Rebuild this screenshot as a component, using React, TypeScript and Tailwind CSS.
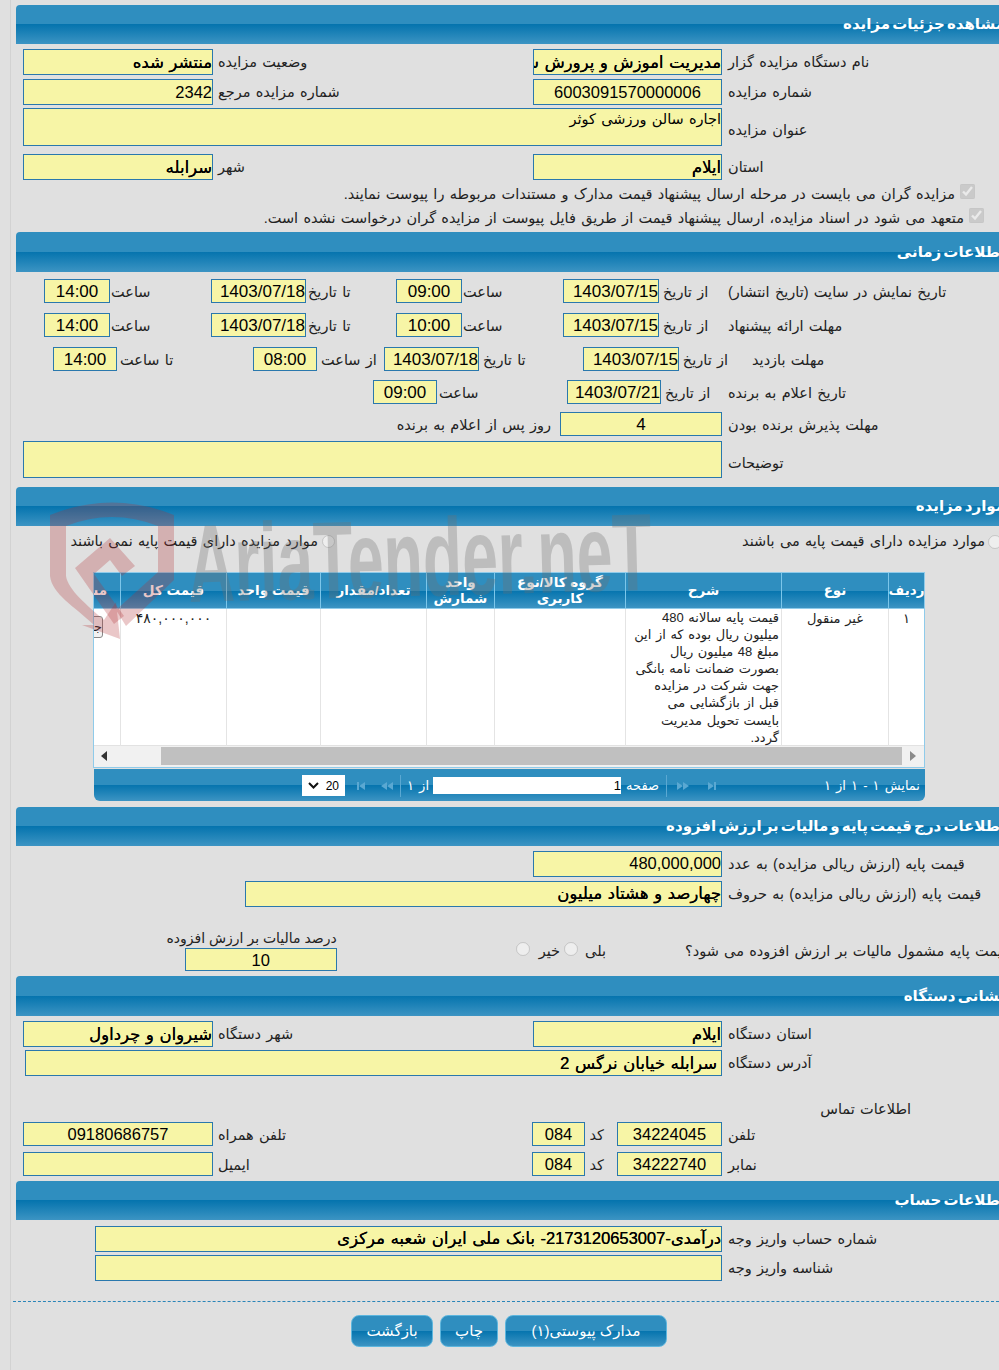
import React from 'react';

const barBg = 'bg-[linear-gradient(to_bottom,#2f8ebf_0%,#2f8ebf_50%,#0574ae_50%,#3c94c3_100%)]';
const val = 'text-[16.5px] [word-spacing:1px] [text-shadow:0.2px_0_0_#000]';
const num = 'text-[16.5px]';

const SectionBar = ({ title, className = '' }: { title: string; className?: string }) => (
  <div className={`${barBg} ml-[16px] h-[39px] rounded-tl-[4px] flex items-center overflow-visible ${className}`}>
    <span className="text-white font-bold text-[15px] -mr-[6px] whitespace-nowrap [word-spacing:-2px]">{title}</span>
  </div>
);

const Box = ({ children, className = '' }: { children?: React.ReactNode; className?: string }) => (
  <div className={`bg-[#f7f5a6] border border-[#2a78ad] text-black overflow-hidden whitespace-nowrap ${className}`}>
    {children}
  </div>
);

const Label = ({ children, className = '' }: { children: React.ReactNode; className?: string }) => (
  <div className={`text-left text-[14.5px] text-[#222] whitespace-nowrap leading-[26px] ${className}`}>{children}</div>
);

const pairGrid = 'grid grid-cols-[277px_189px_320px_190px] h-[25px]';

const TimeBox = ({ value }: { value: string }) => (
  <Box className="text-[17px] text-center h-[24px] leading-[23px]">{value}</Box>
);

const DateBox = ({ value }: { value: string }) => (
  <Box className="text-[17px] text-right h-[24px] leading-[23px]">{value}</Box>
);

const NumBox = ({ value }: { value: string }) => (
  <Box className="text-[16.5px] text-center h-[24px] leading-[23px]">{value}</Box>
);

const PagerIcon = ({ flip, bar, double }: { flip?: boolean; bar?: boolean; double?: boolean }) => (
  <svg width="16" height="10" viewBox="0 0 16 10" className={flip ? '-scale-x-100' : ''} fill="#5aa8d2">
    {bar && <rect x="1" y="1" width="2" height="8" />}
    <path d="M3 5l6-4v8z" />
    {double && <path d="M9 5l6-4v8z" />}
  </svg>
);

const Btn = ({ children, className = '' }: { children: React.ReactNode; className?: string }) => (
  <button className={`${barBg} h-[32px] rounded-[8px] border border-[#5db6de] text-white text-[15px] ${className}`}>{children}</button>
);

const cols = 'grid grid-cols-[36px_107px_156px_131px_68px_106px_94px_106px_60px]';

const headers = ['ردیف', 'نوع', 'شرح', 'گروه کالا/نوع کاربری', 'واحد شمارش', 'تعداد/مقدار', 'قیمت واحد', 'قیمت کل'];

const Watermark = () => (
  <div className="absolute left-0 top-0 w-[999px] h-[660px] pointer-events-none overflow-hidden">
    <svg className="absolute left-[48px] top-[498px]" width="130" height="148" viewBox="0 0 130 148">
      <path
        d="M2 17 Q64 -8 126 17 L126 82 L78 128 L68 112 L110 74 L110 28 Q64 10 18 28 L18 78 C20 92 40 108 56 122 L68 104 L72 141 L34 127 L46 127 C26 108 4 96 2 78 Z"
        fill="#b03035"
        fillOpacity="0.27"
      />
      <path d="M27 70 L62 40 L87 68 L74 78 L62 62 L46 76 L76 118 L66 126 Z" fill="#b03035" fillOpacity="0.27" />
    </svg>
    <div className="absolute left-[188px] top-[509px] origin-left -rotate-[1.5deg] scale-x-[0.585] text-[#707070] opacity-30 font-bold text-[110px] leading-[110px] whitespace-nowrap [word-spacing:0] [font-family:'Liberation_Sans',sans-serif]">
      AriaTender.neT
    </div>
  </div>
);

export default function App() {
  return (
    <div className="relative w-[999px] h-[1370px] overflow-hidden bg-[#e0e0e0] [word-spacing:1.25px] [font-family:'Liberation_Sans','DejaVu_Sans',sans-serif]" dir="rtl">
      <div className="absolute left-[10px] top-0 w-px h-full bg-[#d2d2d2]" />

      <div className="pt-[5px]">
        {/* details */}
        <SectionBar title="مشاهده جزئیات مزایده" />
        <div className={`${pairGrid} mt-[5px]`}>
          <Label className="pl-[6px]">نام دستگاه مزایده گزار</Label>
          <Box className={`${val} leading-[24px]`}>مدیریت اموزش و پرورش شهرستان سیروان</Box>
          <Label className="pl-[5px]">وضعیت مزایده</Label>
          <Box className={`${val} leading-[24px]`}>منتشر شده</Box>
        </div>
        <div className={`${pairGrid} mt-[5px]`}>
          <Label className="pl-[6px]">شماره مزایده</Label>
          <Box className={`${num} leading-[24px] text-center`}>6003091570000006</Box>
          <Label className="pl-[5px]">شماره مزایده مرجع</Label>
          <Box className={`${num} leading-[24px]`}>2342</Box>
        </div>
        <div className="grid grid-cols-[277px_699px] mt-[4px] h-[38px]">
          <Label className="pl-[6px] pt-[9px]">عنوان مزایده</Label>
          <Box className="text-[14.5px] leading-[20px]">اجاره سالن ورزشی کوثر</Box>
        </div>
        <div className={`${pairGrid} mt-[8px]`}>
          <Label className="pl-[6px]">استان</Label>
          <Box className={`${val} leading-[24px]`}>ایلام</Box>
          <Label className="pl-[5px]">شهر</Label>
          <Box className={`${val} leading-[24px]`}>سرابله</Box>
        </div>
        <div className="flex items-center h-[20px] mt-[5px] pr-[24px] text-[14.5px] text-[#222] gap-[5px] whitespace-nowrap">
          <input type="checkbox" disabled checked readOnly className="w-[15px] h-[15px] -mt-[6px] m-0" />
          <span className="pt-[2px]">مزایده گران می بایست در مرحله ارسال پیشنهاد قیمت مدارک و مستندات مربوطه را پیوست نمایند.</span>
        </div>
        <div className="flex items-center h-[20px] mt-[4px] pr-[15px] text-[14.5px] text-[#222] gap-[5px] whitespace-nowrap">
          <input type="checkbox" disabled checked readOnly className="w-[15px] h-[15px] -mt-[6px] m-0" />
          <span className="pt-[2px]">متعهد می شود در اسناد مزایده، ارسال پیشنهاد قیمت از طریق فایل پیوست از مزایده گران درخواست نشده است.</span>
        </div>

        {/* timing */}
        <SectionBar title="اطلاعات زمانی" className="mt-[4px] h-[40px]" />
        <div className="grid grid-cols-[277px_63px_96px_101px_66px_90px_95px_101px_66px] h-[24px] mt-[7px]">
          <Label className="pl-[6px]">تاریخ نمایش در سایت (تاریخ انتشار)</Label>
          <Label className="pl-[4px]">از تاریخ</Label>
          <DateBox value="1403/07/15" />
          <Label className="pl-[1px]">ساعت</Label>
          <TimeBox value="09:00" />
          <Label className="pl-[2px]">تا تاریخ</Label>
          <DateBox value="1403/07/18" />
          <Label className="pl-[1px]">ساعت</Label>
          <TimeBox value="14:00" />
        </div>
        <div className="grid grid-cols-[277px_63px_96px_101px_66px_90px_95px_101px_66px] h-[24px] mt-[10px]">
          <Label className="pl-[6px]">مهلت ارائه پیشنهاد</Label>
          <Label className="pl-[4px]">از تاریخ</Label>
          <DateBox value="1403/07/15" />
          <Label className="pl-[1px]">ساعت</Label>
          <TimeBox value="10:00" />
          <Label className="pl-[2px]">تا تاریخ</Label>
          <DateBox value="1403/07/18" />
          <Label className="pl-[1px]">ساعت</Label>
          <TimeBox value="14:00" />
        </div>
        <div className="grid grid-cols-[277px_43px_96px_104px_95px_67px_64px_136px_64px] h-[24px] mt-[10px]">
          <Label className="pl-[30px]">مهلت بازدید</Label>
          <Label className="pl-[4px] -mr-[6px]">از تاریخ</Label>
          <DateBox value="1403/07/15" />
          <Label className="pl-[4px]">تا تاریخ</Label>
          <DateBox value="1403/07/18" />
          <Label className="pl-[4px]">از ساعت</Label>
          <TimeBox value="08:00" />
          <Label className="pl-[3px]">تا ساعت</Label>
          <TimeBox value="14:00" />
        </div>
        <div className="grid grid-cols-[277px_61px_94px_130px_64px] h-[24px] mt-[9px]">
          <Label className="pl-[6px]">تاریخ اعلام به برنده</Label>
          <Label className="pl-[4px]">از تاریخ</Label>
          <DateBox value="1403/07/21" />
          <Label className="pl-[2px]">ساعت</Label>
          <TimeBox value="09:00" />
        </div>
        <div className="grid grid-cols-[277px_162px_160px] h-[24px] mt-[8px]">
          <Label className="pl-[6px]">مهلت پذیرش برنده بودن</Label>
          <TimeBox value="4" />
          <Label className="pr-[9px] text-right">روز پس از اعلام به برنده</Label>
        </div>
        <div className="grid grid-cols-[277px_699px] mt-[5px] h-[37px]">
          <Label className="pl-[6px] pt-[9px]">توضیحات</Label>
          <Box />
        </div>

        {/* items */}
        <SectionBar title="موارد مزایده" className="mt-[9px]" />
        <div className="flex h-[46px] pt-[4px] text-[14.5px] text-[#222] whitespace-nowrap">
          <div className="w-[664px] flex items-start">
            <input type="radio" disabled className="w-[14px] h-[14px] mt-[5px] -mr-[3px] ml-[3px] shrink-0" />
            <span className="leading-[22px]">موارد مزایده دارای قیمت پایه می باشند</span>
          </div>
          <div className="flex items-start">
            <input type="radio" disabled className="w-[13px] h-[13px] mt-[5px] shrink-0" />
            <span className="mr-[4px] leading-[22px]">موارد مزایده دارای قیمت پایه نمی باشند</span>
          </div>
        </div>

        <div className="mr-[74px] w-[832px] border border-[#8fcbea] overflow-hidden bg-white">
          <div className={`${cols} ${barBg} h-[35px] text-white font-bold text-[13.5px] leading-[16px] [word-spacing:0]`}>
            {headers.map(h => (
              <div key={h} className="border-l border-[#7cc6ea] flex items-center justify-center text-center px-[2px]">
                {h}
              </div>
            ))}
            <div className="flex items-center pr-[13px] whitespace-nowrap">مشاهده</div>
          </div>
          <div className={`${cols} h-[137px] text-[13px] text-[#222] border-t border-[#8fcbea] [word-spacing:1px]`}>
            <div className="border-l border-[#e4e4e4] text-center leading-[17px] pt-[1px]">۱</div>
            <div className="border-l border-[#e4e4e4] text-center leading-[17px] pt-[1px]">غیر منقول</div>
            <div className="border-l border-[#e4e4e4] leading-[17.1px] pr-[2px] whitespace-nowrap">
              قیمت پایه سالانه 480<br />
              میلیون ریال بوده که از این<br />
              مبلغ 48 میلیون ریال<br />
              بصورت ضمانت نامه بانگی<br />
              جهت شرکت در مزایده<br />
              قبل از بازگشایی می<br />
              بایست تحویل مدیریت<br />
              گردد.
            </div>
            <div className="border-l border-[#e4e4e4]" />
            <div className="border-l border-[#e4e4e4]" />
            <div className="border-l border-[#e4e4e4]" />
            <div className="border-l border-[#e4e4e4]" />
            <div className="border-l border-[#e4e4e4] text-center text-[14px] leading-[17px] pt-[1px]">۴۸۰,۰۰۰,۰۰۰</div>
            <div className="pr-[17px] pt-[7px]">
              <div className="w-[43px] h-[22px] border border-[#888] rounded-[3px] bg-[#f2f2f2] text-[13px] leading-[20px] text-right whitespace-nowrap overflow-hidden">جزئیات</div>
            </div>
          </div>
          <div className="flex items-start h-[22px] bg-[#f1f1f1] border-t border-[#e2e2e2] pt-[1px] pr-[8px] gap-[8px]">
            <svg width="6" height="10" viewBox="0 0 6 10" fill="#8a8a8a" className="mt-[4px]"><path d="M0 0l6 5-6 5z" /></svg>
            <div className="h-[18px] w-[741px] bg-[#c0c0c0]" />
            <svg width="6" height="10" viewBox="0 0 6 10" fill="#333" className="mt-[4px] mr-[46px]"><path d="M6 0L0 5l6 5z" /></svg>
          </div>
        </div>

        <div className={`${barBg} mr-[74px] w-[831px] h-[32px] mt-px rounded-b-[6px] flex items-center text-white text-[13px] whitespace-nowrap pt-px [word-spacing:1.5px]`}>
          <span className="w-[101px] pr-[5px]">نمایش ۱ - ۱ از ۱</span>
          <div className="flex items-center mr-[107px] gap-[9px]">
            <PagerIcon bar flip />
            <PagerIcon double flip />
          </div>
          <div className="w-px h-[22px] bg-[#5aa8d2] mr-[9px]" />
          <span className="mr-[7px]">صفحه</span>
          <div className="bg-white w-[188px] h-[17px] mr-[5px] text-black text-[13px] leading-[17px] text-right pr-0">1</div>
          <span className="mr-[4px]">از ۱</span>
          <div className="w-px h-[22px] bg-[#5aa8d2] mr-[6px]" />
          <div className="flex items-center mr-[6px] gap-[6px]">
            <PagerIcon double />
            <PagerIcon bar />
          </div>
          <div className="bg-white w-[43px] h-[21px] mr-[11px] flex items-center justify-between px-[6px] text-black text-[12px]" dir="ltr">
            <svg width="11" height="7" viewBox="0 0 11 7" fill="none" stroke="#111" strokeWidth="2"><path d="M1 1l4.5 4.5L10 1" /></svg>
            <span>20</span>
          </div>
        </div>

        {/* base price */}
        <SectionBar title="اطلاعات درج قیمت پایه و مالیات بر ارزش افزوده" className="mt-[6px]" />
        <div className={`${pairGrid} mt-[5px] h-[24px]`}>
          <Label className="pl-[6px]">قیمت پایه (ارزش ریالی مزایده) به عدد</Label>
          <Box className={`${num} leading-[23px]`}>480,000,000</Box>
        </div>
        <div className="grid grid-cols-[277px_477px] mt-[5px] h-[24px]">
          <Label className="pl-[6px]">قیمت پایه (ارزش ریالی مزایده) به حروف</Label>
          <Box className={`${val} leading-[23px]`}>چهارصد و هشتاد میلیون</Box>
        </div>
        <div className="flex h-[38px] mt-[28px] text-[14.5px] text-[#222] whitespace-nowrap">
          <div className="w-[328px] shrink-0 -mr-[14px] text-left pt-[6px] leading-[24px]">قیمت پایه مشمول مالیات بر ارزش افزوده می شود؟</div>
          <div className="flex items-start pt-[6px] mr-[79px] leading-[24px]">
            <span>بلی</span>
            <input type="radio" disabled className="w-[14px] h-[14px] mt-[3px] mr-[7px]" />
            <span className="mr-[4px]">خیر</span>
            <input type="radio" disabled className="w-[14px] h-[14px] mt-[3px] mr-[9px]" />
          </div>
          <div className="mr-[179px] w-[152px] -mt-[5px]">
            <div className="leading-[20px] text-[14px] [word-spacing:0] text-right">درصد مالیات بر ارزش افزوده</div>
            <Box className="text-[16.5px] text-center h-[23px] w-[152px] leading-[23px]">10</Box>
          </div>
        </div>

        {/* device address */}
        <SectionBar title="نشانی دستگاه" className="mt-[5px] h-[40px]" />
        <div className={`${pairGrid} mt-[5px]`}>
          <Label className="pl-[6px]">استان دستگاه</Label>
          <Box className={`${val} leading-[24px]`}>ایلام</Box>
          <Label className="pl-[5px]">شهر دستگاه</Label>
          <Box className={`${val} leading-[24px]`}>شیروان و چرداول</Box>
        </div>
        <div className="grid grid-cols-[277px_697px] mt-[4px] h-[25px]">
          <Label className="pl-[6px]">آدرس دستگاه</Label>
          <Box className={`${val} leading-[24px] pr-[4px]`}>سرابله خیابان نرگس 2</Box>
        </div>
        <div className="text-[14.5px] text-[#222] h-[24px] mt-[22px] mr-[88px] leading-[24px]">اطلاعات تماس</div>
        <div className="grid grid-cols-[277px_105px_32px_53px_319px_190px] h-[24px] mt-[1px]">
          <Label className="pl-[6px]">تلفن</Label>
          <NumBox value="34224045" />
          <Label className="pr-[13px] text-right">کد</Label>
          <NumBox value="084" />
          <Label className="pl-[5px]">تلفن همراه</Label>
          <NumBox value="09180686757" />
        </div>
        <div className="grid grid-cols-[277px_105px_32px_53px_319px_190px] h-[24px] mt-[6px]">
          <Label className="pl-[6px]">نمابر</Label>
          <NumBox value="34222740" />
          <Label className="pr-[13px] text-right">کد</Label>
          <NumBox value="084" />
          <Label className="pl-[5px]">ایمیل</Label>
          <NumBox value="" />
        </div>

        {/* account */}
        <SectionBar title="اطلاعات حساب" className="mt-[5px]" />
        <div className="grid grid-cols-[277px_627px] mt-[6px] h-[24px]">
          <Label className="pl-[6px]">شماره حساب واریز وجه</Label>
          <Box className={`${val} leading-[23px]`}>درآمدی-2173120653007- بانک ملی ایران شعبه مرکزی</Box>
        </div>
        <div className="grid grid-cols-[277px_627px] mt-[5px] h-[24px]">
          <Label className="pl-[6px]">شناسه واریز وجه</Label>
          <Box />
        </div>

        <div className="ml-[13px] mt-[22px] border-t border-dashed border-[#2a85b8]" />
        <div className="flex mt-[13px] mr-[332px] gap-[7px]">
          <Btn className="w-[162px]">مدارک پیوستی(۱)</Btn>
          <Btn className="w-[58px]">چاپ</Btn>
          <Btn className="w-[82px]">بازگشت</Btn>
        </div>
      </div>

      <Watermark />
    </div>
  );
}
